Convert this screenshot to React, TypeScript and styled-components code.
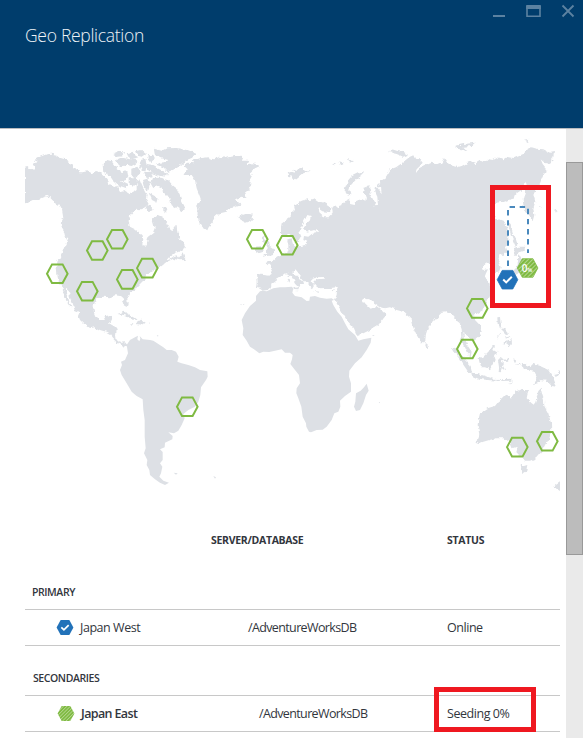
import React from "react";
import styled, { createGlobalStyle } from "styled-components";

const GlobalStyle = createGlobalStyle`
  * { box-sizing: border-box; }
  body { margin: 0; background: #fff; overflow: hidden; }
`;

const Blade = styled.div`
  position: relative;
  display: flex;
  flex-direction: column;
  width: 583px;
  height: 738px;
  overflow: hidden;
  background: #fff;
  color: #32363d;
  font-family: "Open Sans", "Noto Sans", sans-serif;
`;

const Header = styled.header`
  display: flex;
  justify-content: space-between;
  flex: none;
  height: 129px;
  padding-left: 25px;
  background: #003d6c;
  border-bottom: 1px solid #b9bcc0;
`;

const Title = styled.h1`
  margin: 23px 0 0;
  color: #eef3f7;
  font-size: 17.5px;
  line-height: 24px;
  font-weight: 350;
  letter-spacing: -0.3px;
  white-space: nowrap;
`;

const WindowControls = styled.svg`
  width: 90px;
  height: 24px;
  flex: none;
`;

const Body = styled.div`
  display: flex;
  flex: 1;
  min-height: 0;
`;

const Content = styled.main`
  width: 566px;
  padding: 9px 6px 0 25px;
  overflow: hidden;
`;

const Map = styled.svg`
  display: block;
  width: 535px;
  height: 362px;
`;

const ScrollTrack = styled.div`
  width: 17px;
  padding-top: 33px;
  background: #eaeaea;
`;

const ScrollThumb = styled.div`
  height: 393px;
  background: #bcbcbc;
  border: 1px solid #999;
`;

const Columns = styled.div`
  display: grid;
  grid-template-columns: 186px 236px 1fr;
  align-items: center;
  height: 18px;
  margin-top: 31px;
`;

const ColumnName = styled.span`
  font-size: 10.5px;
  line-height: 18px;
  font-weight: 700;
  letter-spacing: -0.3px;
  white-space: nowrap;
`;

const Section = styled.section<{ $gap: number }>`
  margin-top: ${(p) => p.$gap}px;
`;

const SectionName = styled.h2<{ $indent: number }>`
  height: 26px;
  margin: 0;
  padding-left: ${(p) => p.$indent}px;
  font-size: 10.5px;
  line-height: 18px;
  font-weight: 600;
  letter-spacing: -0.42px;
`;

const Row = styled.div<{ $database: number }>`
  display: grid;
  grid-template-columns: ${(p) => p.$database}px ${(p) => 422 - p.$database}px 1fr;
  align-items: center;
  height: 37px;
  border-top: 1px solid #c8c8c8;
  border-bottom: 1px solid #c8c8c8;
`;

const Region = styled.div<{ $indent: number }>`
  display: flex;
  align-items: center;
  gap: 6px;
  padding-left: ${(p) => p.$indent}px;
`;

const Text = styled.span<{ $strong?: boolean; $spacing?: number }>`
  font-size: 12.5px;
  line-height: 18px;
  font-weight: ${(p) => (p.$strong ? 650 : 400)};
  letter-spacing: ${(p) => p.$spacing ?? -0.45}px;
  white-space: nowrap;
`;

const RowIcon = styled.svg`
  width: 18px;
  height: 17px;
  flex: none;
`;

const Highlight = styled.div<{ $x: number; $y: number; $w: number; $h: number }>`
  position: absolute;
  left: ${(p) => p.$x}px;
  top: ${(p) => p.$y}px;
  width: ${(p) => p.$w}px;
  height: ${(p) => p.$h}px;
  border: 5px solid #ef1820;
`;

type Landmass = { x: number; y: number; rough?: boolean; shapes: string[] };

/* Outlines are stored at three times map scale, relative to each group's origin. */
const LAND: Landmass[] = [
  {
    x: 20, y: 130, rough: true,
    shapes: [
      // Mainland North America
      "15,110 22,108 30,115 45,122 44,112 37,110 40,100 55,97 43,90 60,80 80,73 95,71 110,74 122,84 135,88 148,97 162,110 178,127 190,127 205,124 215,130 228,123 240,126 250,135 258,142 265,152 268,165 285,172 292,168 300,178 305,186 318,182 330,190 342,186 350,180 350,163 358,148 365,165 372,180 380,195 378,208 386,222 375,232 362,238 350,236 340,245 330,258 326,275 330,290 345,298 355,305 367,315 370,330 367,345 376,347 382,335 384,320 398,310 404,295 401,282 398,272 402,262 412,254 425,260 435,268 442,280 446,294 455,302 465,292 470,284 472,310 480,325 490,340 495,350 490,360 476,364 462,370 448,380 438,392 450,388 462,378 470,376 474,386 488,370 492,380 498,390 480,391 460,386 440,396 425,408 415,415 400,422 385,435 375,440 372,450 360,462 352,470 345,480 330,490 322,505 323,520 318,535 312,520 308,505 300,498 285,496 270,502 250,500 235,505 225,515 220,530 222,548 228,562 238,570 250,570 258,558 274,554 273,568 267,580 285,590 290,597 288,615 290,630 300,638 315,637 322,645 318,652 305,647 292,640 278,625 270,612 258,605 240,600 225,592 210,594 190,580 180,570 174,555 178,545 165,540 158,520 150,500 145,482 138,476 138,490 145,505 149,520 156,535 148,528 140,515 134,498 130,485 127,470 118,460 113,445 110,415 112,395 118,385 125,370 132,350 140,335 145,325 135,318 132,305 125,293 122,280 130,265 126,240 118,225 105,218 92,205 80,195 65,200 58,210 45,210 30,217 15,220",
      // Arctic archipelago
      "248,105 262,90 275,94 285,108 300,120 305,130 322,122 325,138 318,150 302,155 322,165 320,175 292,165 275,150 265,135 250,125",
      "280,72 295,66 312,66 308,76 290,78", "320,70 340,65 345,76 355,82 336,88 325,80", "288,90 305,82 330,88 347,86 352,98 335,108 315,104 305,112 296,104",
      "348,64 364,60 378,72 372,82 356,78", "362,90 376,86 380,105 376,122 366,124 358,108", "334,116 352,110 362,125 352,142 334,138", "372,125 394,126 398,142 380,144",
      "326,142 348,142 354,155 342,168 326,162", "366,150 386,144 390,160 384,182 372,172", "375,235 390,224 398,240 388,246", "386,188 400,196 416,205 412,218 396,210", "430,230 442,238 438,250 430,246",
      "396,144 420,143 445,150 455,166 470,178 480,198 484,210 494,230 488,244 475,236 462,228 446,218 456,206 440,197 430,186 424,172 410,166 400,178 390,160",
      "402,56 425,62 440,55 470,54 500,60 530,72 515,84 495,92 480,105 465,120 445,128 438,120 430,112 408,104 420,98 438,96 445,90 425,85 405,75",
      "376,104 400,108 418,118 444,130 440,140 420,138 400,130 386,122", "382,76 398,74 404,86 394,96 384,90",
      // Caribbean
      "292,552 312,545 326,552 345,563 355,571 330,568 316,556", "350,576 362,568 377,578 368,584 352,583", "326,580 337,580 335,584", "385,578 393,578 392,582",
    ],
  },
  {
    x: 180, y: 130, rough: true,
    shapes: [
      // Greenland
      "10,105 25,98 40,100 35,92 60,85 85,82 100,88 120,80 140,83 165,78 190,82 182,92 205,92 200,103 220,100 240,108 225,115 212,125 216,140 208,155 215,165 205,175 210,184 192,190 200,205 185,200 165,208 185,225 165,232 150,235 140,245 120,250 105,262 98,278 86,292 82,301 68,292 58,278 52,255 55,235 50,225 64,212 58,195 50,175 45,150 35,135 15,135 12,128 25,120",
      "0,58 20,62 50,73 30,82 15,92 0,96", "0,218 12,228 8,236 0,242",
      // Iceland, Britain and the northern islands
      "172,256 182,264 178,254 190,257 205,252 217,254 219,265 210,273 195,278 182,272",
      "245,322 256,316 252,326 264,332 270,348 278,353 286,364 280,375 262,378 250,380 262,370 255,362 262,352 252,342 246,334",
      "228,350 245,348 248,362 228,368",
      "320,130 335,125 345,128 340,116 352,120 362,114 375,118 385,124 365,132 355,140 342,151 338,140 325,138", "376,122 392,121 384,127", "456,103 468,100 464,106", "478,94 492,98 482,104", "500,88 522,90 510,98",
      "552,124 535,129 515,139 502,154 495,175 493,190 512,196 508,180 513,165 527,150 547,135",
      "624,66 636,58 650,62 668,66 684,74 670,80 650,72", "825,48 850,42 888,38 878,48 850,50 862,62 842,60", "1032,32 1048,29 1044,36",
      // Eurasia
      "303,290 305,280 318,270 330,262 335,250 345,240 342,228 352,222 365,212 380,208 390,212 400,206 412,214 430,217 445,225 454,235 450,247 430,244 415,233 418,250 432,262 445,262 458,248 456,232 464,222 475,232 485,228 490,218 502,212 512,208 510,222 524,225 530,212 545,207 556,212 558,202 552,185 555,170 566,166 570,180 572,195 580,210 588,222 583,230 594,224 592,200 585,185 588,170 600,160 605,175 590,170 605,190 602,165 598,152 618,140 632,118 648,112 665,100 680,88 690,80 700,76 705,86 720,88 728,98 720,108 710,118 706,130 720,115 735,107 755,98 770,104 784,98 792,84 800,96 810,105 832,112 845,108 860,100 872,94 888,100 900,92 915,96 925,88 940,90 955,82 970,88 982,80 1000,84 1015,78 1030,72 1040,60 1055,52 1070,56 1090,58 1110,68 1122,66 1120,78 1110,85 1118,92 1110,102 1090,98 1082,90 1088,105 1102,122 1095,128 1088,140 1080,160 1060,190 1062,200 1066,215 1060,235 1063,255 1058,274 1045,255 1032,238 1028,210 1036,180 1040,162 1034,155 1028,178 1010,190 1005,205 985,210 970,215 948,218 945,235 945,262 956,268 972,274 982,290 985,320 985,338 975,352 980,365 970,375 958,372 955,392 962,412 956,428 940,430 932,420 930,405 918,398 905,410 908,420 924,418 918,430 914,440 926,450 932,480 930,495 920,520 910,540 895,548 880,558 885,570 900,586 905,605 900,616 888,625 878,632 870,620 855,615 850,605 852,630 865,650 875,665 872,680 860,666 850,645 842,630 847,620 845,595 840,580 832,574 825,565 812,550 800,547 785,548 778,555 765,570 745,590 738,612 736,630 728,640 720,632 710,615 698,588 692,565 680,555 670,545 650,540 630,532 615,535 600,530 585,520 570,510 555,505 547,508 555,520 572,536 592,528 600,534 617,550 610,566 595,585 570,600 535,617 528,610 522,595 500,570 485,545 470,520 464,510 470,494 472,472 450,475 435,474 415,475 405,465 400,455 408,448 432,446 428,441 410,442 395,446 392,452 402,464 396,475 388,468 385,458 375,455 365,445 350,425 344,419 340,427 352,440 370,454 372,462 362,462 358,472 345,458 335,440 325,432 315,430 305,437 298,440 288,446 286,455 275,462 272,472 262,480 248,482 240,476 231,474 233,455 231,434 245,431 270,434 276,420 270,408 257,397 268,393 278,392 290,380 300,375 312,370 325,360 325,345 322,330 335,325 338,340 345,350 360,348 375,345 382,335 370,330 372,318 385,320 395,312 405,310 418,302 410,298 395,302 378,305 372,295 378,280 390,268 392,258 382,255 372,275 362,290 358,305 364,320 355,335 345,340 335,322 325,315 310,318 303,308",
      "320,448 326,446 328,458 323,458", "322,436 327,434 326,442", "340,474 358,472 355,481 342,480", "402,484 418,485 412,488", "452,484 462,480 458,487",
      // Sakhalin and Japan
      "984,278 992,285 998,310 1006,325 1012,345 1008,352 996,325 990,305", "1004,355 1015,350 1034,350 1030,362 1014,368 1006,375 1000,365", "1014,376 1024,385 1028,405 1016,430 1000,438 984,440 996,426 1008,414 1014,398", "974,440 984,445 980,460 972,452", "1077,225 1083,228 1078,231", "1118,238 1134,246 1125,247",
    ],
  },
  {
    x: 230, y: 270,
    shapes: [
      "90,64 97,62 110,64 130,55 150,52 165,52 185,50 190,55 187,68 195,78 215,82 230,93 238,92 240,80 255,78 270,83 290,86 305,85 312,90 305,92 310,105 322,125 335,140 345,160 355,178 375,195 385,212 400,208 424,203 422,218 410,240 395,262 375,280 358,302 357,320 363,340 363,365 345,378 330,392 331,410 325,425 313,430 305,450 290,470 278,479 260,480 243,487 237,485 229,470 228,460 218,440 214,410 205,385 199,370 200,355 210,340 207,315 195,300 181,282 186,268 188,255 180,248 165,248 155,238 135,242 118,246 100,245 88,250 72,238 60,230 50,212 38,195 40,175 35,150 45,130 60,108 78,92 78,78",
      "410,341 416,362 408,375 400,400 390,420 378,423 372,410 376,395 378,370 392,362 402,352",
      "426,195 434,195 430,198", "446,396 450,396 449,400", "30,103 35,103 34,106", "38,104 43,101 42,105",
    ],
  },
  {
    x: 100, y: 310,
    shapes: [
      "80,105 90,90 105,82 114,77 112,88 118,94 121,86 119,78 128,88 150,90 160,92 175,102 190,112 200,120 215,120 228,125 236,140 232,155 245,160 265,165 285,172 300,180 322,184 323,200 318,210 303,232 301,255 295,275 285,290 265,300 250,312 254,325 245,345 235,362 222,370 205,367 218,378 217,388 195,398 194,412 180,418 188,426 188,450 180,460 187,470 183,490 178,500 190,512 207,518 195,525 180,518 165,508 150,495 148,480 140,465 142,450 132,430 137,415 134,380 134,330 130,300 128,268 110,258 95,245 80,220 65,195 60,180 66,165 63,155 75,150 84,130",
      "221,488 233,490 228,494", "340,498 348,502 345,506", "170,76 175,76 174,80",
    ],
  },
  {
    x: 400, y: 290, rough: true,
    shapes: [
      // Australia, Tasmania and New Zealand
      "235,390 240,370 262,355 285,348 295,335 308,325 320,313 328,322 335,322 345,305 358,300 365,295 375,300 387,300 382,315 380,325 395,340 403,345 410,325 415,300 422,293 427,315 432,330 433,348 445,370 453,400 454,425 448,445 435,465 425,485 408,505 390,512 378,512 368,500 360,498 348,485 344,490 350,470 337,475 335,465 325,450 310,445 290,445 268,450 250,455 238,460 226,455 236,448 238,430 233,405",
      "362,524 372,528 382,525 378,545 367,552", "480,577 460,590 480,603",
      // Indonesia and New Guinea
      "365,220 375,218 382,224 380,232 400,222 425,230 445,240 452,252 460,264 470,290 455,288 440,273 425,270 415,278 402,282 412,265 402,245 388,242 372,235",
      "462,252 472,250 480,244 480,254 470,257",
      "236,205 250,200 265,185 278,165 285,166 280,180 293,188 282,195 287,210 278,225 270,238 255,232 243,232 238,215",
      "156,170 170,176 182,192 195,210 212,228 217,250 205,246 190,224 176,200 162,184",
      "214,251 238,253 262,260 282,266 300,267 298,272 262,270 235,266 215,257", "304,268 336,266 330,272 304,273", "324,284 340,272 334,280",
      "294,210 300,204 312,209 330,202 324,212 304,214 302,222 313,219 308,226 316,242 305,234 302,247 296,246 297,232",
      "340,205 348,207 344,216", "342,222 360,222 362,227 345,226",
      // Philippines and Sri Lanka
      "292,82 300,81 302,100 308,113 300,112 293,102", "304,118 314,115 322,125 330,130 318,132 312,126", "316,134 328,142 318,148", "308,160 325,150 335,148 336,162 330,170 320,160 312,164", "288,150 298,128 300,132",
      "75,155 83,165 80,175 73,168",
    ],
  },
];

const HEX = "-10.3,0 -5.3,-9.3 5.3,-9.3 10.3,0 5.3,9.3 -5.3,9.3";

const REGIONS: [number, number][] = [
  [57.3, 273.7], [97.3, 250.5], [117.3, 239.3], [147.3, 268.1], [127.3, 279.4], [87.3, 291.2], [257.3, 239.3],
  [287.3, 245.2], [187.3, 406.7], [477.3, 308.4], [467.3, 349], [517.3, 447.1], [547.3, 441.3],
];

const Stripes = ({ id }: { id: string }) => (
  <pattern id={id} width="3" height="3" patternUnits="userSpaceOnUse" patternTransform="rotate(45)">
    <rect width="3" height="3" fill="#7fba42" />
    <rect width="0.9" height="3" fill="#b9da96" />
  </pattern>
);

const WorldMap = () => (
  <Map viewBox="25 138 535 362">
    <defs>
      <Stripes id="map-stripes" />
      <filter id="coast" x="-5%" y="-5%" width="110%" height="110%" colorInterpolationFilters="sRGB">
        <feTurbulence type="fractalNoise" baseFrequency="0.22" numOctaves="2" seed="4" />
        <feDisplacementMap in="SourceGraphic" scale="4.5" xChannelSelector="R" yChannelSelector="G" />
      </filter>
    </defs>
    {LAND.map((land, i) => (
      <g key={i} filter={land.rough ? "url(#coast)" : undefined}>
        <g transform={`translate(${land.x} ${land.y}) scale(0.33333)`} fill="#dde0e5">
          {land.shapes.map((points, n) => <polygon key={n} points={points} />)}
        </g>
      </g>
    ))}
    {REGIONS.map(([x, y]) => (
      <polygon key={`${x},${y}`} points={HEX} transform={`translate(${x} ${y})`} fill="none" stroke="#7fba42" strokeWidth="2" />
    ))}
    <path d="M508,266 V207 H528 V253" fill="none" stroke="#4a89bd" strokeWidth="2" strokeDasharray="5.4 4.7" />
    <g transform="translate(527.6 268)">
      <polygon points={HEX} fill="url(#map-stripes)" stroke="#7fba42" strokeWidth="0.8" />
      <text x="-5.8" y="3.6" fill="#fff" fontSize="10" fontWeight="600">0<tspan fontSize="5.5">%</tspan></text>
    </g>
    <g transform="translate(507.5 279.7)">
      <polygon points={HEX} fill="#2272b9" stroke="#2272b9" strokeWidth="0.8" />
      <path d="M-4.3,-0.2 L-1.3,2.7 L4.3,-3" fill="none" stroke="#fff" strokeWidth="2" />
    </g>
  </Map>
);

const App = () => (
  <Blade>
    <GlobalStyle />
    <Header>
      <Title>Geo Replication</Title>
      <WindowControls viewBox="493 0 90 24" fill="none" stroke="#5c82a1">
        <path d="M493,16 H505" strokeWidth="2" />
        <path d="M527,6 V16.3 H540 V6" strokeWidth="1.6" />
        <path d="M526.2,7 H540.8" strokeWidth="4" />
        <path d="M562.5,5.5 L573.5,16.5 M573.5,5.5 L562.5,16.5" strokeWidth="1.8" />
      </WindowControls>
    </Header>
    <Body>
      <Content>
        <WorldMap />
        <Columns>
          <span />
          <ColumnName>SERVER/DATABASE</ColumnName>
          <ColumnName>STATUS</ColumnName>
        </Columns>
        <Section $gap={34}>
          <SectionName $indent={7}>PRIMARY</SectionName>
          <Row $database={223}>
            <Region $indent={31}>
              <RowIcon viewBox="-11 -10.4 22 20.8">
                <polygon points={HEX} fill="#2272b9" />
                <path d="M-4.5,-0.2 L-1.3,2.9 L4.5,-3" fill="none" stroke="#fff" strokeWidth="2.1" />
              </RowIcon>
              <Text>Japan West</Text>
            </Region>
            <Text $spacing={-0.63}>/AdventureWorksDB</Text>
            <Text>Online</Text>
          </Row>
        </Section>
        <Section $gap={23}>
          <SectionName $indent={8}>SECONDARIES</SectionName>
          <Row $database={234}>
            <Region $indent={32}>
              <RowIcon viewBox="-11 -10.4 22 20.8">
                <defs><Stripes id="row-stripes" /></defs>
                <polygon points={HEX} fill="url(#row-stripes)" />
              </RowIcon>
              <Text $strong $spacing={-0.62}>Japan East</Text>
            </Region>
            <Text $spacing={-0.63}>/AdventureWorksDB</Text>
            <Text>Seeding 0%</Text>
          </Row>
        </Section>
      </Content>
      <ScrollTrack>
        <ScrollThumb />
      </ScrollTrack>
    </Body>
    <Highlight $x={490} $y={185} $w={61} $h={123} />
    <Highlight $x={434} $y={687} $w={102} $h={45} />
  </Blade>
);

export default App;
